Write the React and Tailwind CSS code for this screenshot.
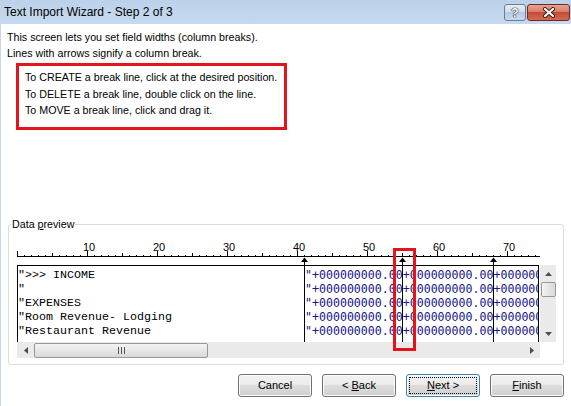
import React from "react";

const UI = "font-['Liberation_Sans',Arial,sans-serif]";

function Ruler() {
  const ticks = [];
  for (let n = 0; n <= 74; n++) {
    const x = 7 * n;
    if (n % 10 === 0) ticks.push(<rect key={n} x={x} y={14} width={1} height={5} fill="#000" />);
    else if (n % 5 === 0) ticks.push(<rect key={n} x={x} y={16} width={1} height={3} fill="#000" />);
    else ticks.push(<rect key={n} x={x} y={18} width={1} height={1} fill="#000" />);
  }
  const labels = [10, 20, 30, 40, 50, 60, 70];
  return (
    <svg width="523" height="28" className="block" shapeRendering="crispEdges">
      <rect x="0" y="19" width="523" height="1" fill="#000" />
      {ticks}
      {labels.map((n) => (
        <text
          key={n}
          x={7 * n + 2}
          y={13.5}
          textAnchor="middle"
          fontFamily="'Liberation Sans', Arial, sans-serif"
          fontSize="11"
          fill="#000"
        >
          {n}
        </text>
      ))}
    </svg>
  );
}

function Breaks() {
  const cols = [41, 55, 68];
  return (
    <svg width="523" height="105" className="absolute left-0 top-0 pointer-events-none">
      {cols.map((c) => {
        const x = 7 * c;
        return (
          <g key={c}>
            <polygon points={`${x + 0.5},20.5 ${x + 4},25 ${x - 3},25`} fill="#000" />
            <rect x={x} y={24} width="1" height="81" fill="#000" shapeRendering="crispEdges" />
          </g>
        );
      })}
    </svg>
  );
}

const rows = ['">>> INCOME', '"', '"EXPENSES', '"Room Revenue- Lodging', '"Restaurant Revenue'];
const nums = '"+000000000.00+000000000.00+000000000.00+000000000.00';

function Arrow({ dir }) {
  const pts = {
    up: "0,4 3.5,0 7,4",
    down: "0,0 3.5,4 7,0",
    left: "4,0 0,3.5 4,7",
    right: "0,0 4,3.5 0,7",
  }[dir];
  const w = dir === "up" || dir === "down" ? 7 : 4;
  const h = dir === "up" || dir === "down" ? 4 : 7;
  return (
    <svg width={w} height={h} className="block">
      <polygon points={pts} fill="#4d4d4d" />
    </svg>
  );
}

function Btn({ children, primary }) {
  return (
    <div
      className={`w-[74px] h-[23px] rounded-[3px] border ${
        primary ? "border-[#3c7fb1]" : "border-[#707070]"
      } bg-[linear-gradient(#f2f2f2_0%,#ebebeb_50%,#dddddd_50%,#cfcfcf_100%)] shadow-[inset_0_0_0_1px_#fbfbfb] flex items-center justify-center p-[2px]`}
    >
      <div
        className={`w-full h-full flex items-center justify-center text-[11px] text-black ${
          primary ? "border border-dotted border-black" : ""
        }`}
      >
        <span className="whitespace-pre">{children}</span>
      </div>
    </div>
  );
}

export default function App() {
  return (
    <div className={`relative w-[571px] h-[406px] bg-white overflow-hidden ${UI}`}>
      {/* Title bar */}
      <div className="h-[24px] flex items-start bg-linear-to-b from-[#bcd2ea] to-[#c5d9ef]">
        <div className="pl-[4px] pt-[5px] text-[12px] leading-[14px] text-black">
          Text Import Wizard - Step 2 of 3
        </div>
        <div className="ml-auto flex gap-[1px] pt-[4px] pr-[1px]">
          <div className="w-[22px] h-[17px] rounded-[3px] border border-[#6b7c93] bg-[linear-gradient(#e6eef7_0%,#cfdcec_50%,#b8cbe2_50%,#c9d9ec_100%)] flex items-center justify-center">
            <span className="text-[12px] font-bold leading-none text-white [text-shadow:0_0_1px_#223,0_0_1px_#223,0_0_1px_#223]">
              ?
            </span>
          </div>
          <div className="w-[43px] h-[17px] rounded-[3px] border border-[#6e2a22] bg-[linear-gradient(#e8a493_0%,#d87c68_45%,#c44a33_50%,#d36a52_100%)] flex items-center justify-center">
            <svg width="14" height="11">
              <path d="M3 2 L11 9 M11 2 L3 9" stroke="#3b1a16" strokeWidth="4" strokeLinecap="round" />
              <path d="M3 2 L11 9 M11 2 L3 9" stroke="#fff" strokeWidth="2.2" strokeLinecap="round" />
            </svg>
          </div>
        </div>
      </div>

      {/* Body */}
      <div className="h-[382px] border-l border-[#c4d8ee] flex flex-col">
        <div className="pl-[6px] pt-[5px] text-[10.7px] leading-[16px] text-black whitespace-nowrap">
          <div>This screen lets you set field widths (column breaks).</div>
          <div>Lines with arrows signify a column break.</div>
        </div>

        <div className="ml-[15px] mt-[2px] w-[271px] h-[67px] border-[3px] border-[#e3141b] pl-[6px] pt-[3px] text-[10.7px] leading-[16.5px] text-black whitespace-nowrap">
          <div>To CREATE a break line, click at the desired position.</div>
          <div>To DELETE a break line, double click on the line.</div>
          <div>To MOVE a break line, click and drag it.</div>
        </div>

        <fieldset className="ml-[7px] mr-[7px] mt-[87px] border border-[#d5dfe5] rounded-[3px]">
          <legend className="ml-[2px] px-[1px] text-[10.7px] leading-[14px] text-black">
            Data <u>p</u>review
          </legend>
          <div className="pl-[8px] pr-[7px] pt-[6px] pb-[6px]">
            <div className="relative w-[539px]">
              <Ruler />
              <div className="flex">
                <div className="w-[522px] h-[77px] border-l border-t border-r border-black overflow-hidden pt-[2px]">
                  {rows.map((r, i) => (
                    <div key={i} className="flex h-[14px] leading-[14px] whitespace-pre">
                      <span className="w-[287px] shrink-0 font-['Liberation_Mono','Courier_New',monospace] text-[11.67px] text-black">
                        {r}
                      </span>
                      <span className="font-['DejaVu_Sans_Mono',monospace] text-[11.6px] text-[#16168c]">
                        {nums}
                      </span>
                    </div>
                  ))}
                </div>
                <div className="ml-[1px] w-[16px] h-[77px] bg-[#eaeaea] flex flex-col items-center">
                  <div className="h-[17px] flex items-center justify-center">
                    <Arrow dir="up" />
                  </div>
                  <div className="w-[15px] h-[15px] rounded-[2px] border border-[#979797] bg-linear-to-r from-[#f4f4f4] to-[#d9d9d9]" />
                  <div className="flex-1" />
                  <div className="h-[17px] flex items-center justify-center">
                    <Arrow dir="down" />
                  </div>
                </div>
              </div>
              <div className="w-[523px] h-[16px] bg-[#eaeaea] flex items-center">
                <div className="w-[17px] flex items-center justify-center">
                  <Arrow dir="left" />
                </div>
                <div className="w-[174px] h-[15px] rounded-[2px] border border-[#979797] bg-linear-to-b from-[#f4f4f4] to-[#d9d9d9] flex items-center justify-center">
                  <svg width="7" height="7" shapeRendering="crispEdges">
                    <rect x="0" y="0" width="1" height="7" fill="#555" />
                    <rect x="3" y="0" width="1" height="7" fill="#555" />
                    <rect x="6" y="0" width="1" height="7" fill="#555" />
                  </svg>
                </div>
                <div className="flex-1" />
                <div className="w-[17px] flex items-center justify-center">
                  <Arrow dir="right" />
                </div>
              </div>
              <Breaks />
            </div>
          </div>
        </fieldset>

        <div className="mt-[9px] pr-[7px] flex justify-end gap-[10px]">
          <Btn>Cancel</Btn>
          <Btn>
            {"< "}
            <u>B</u>ack
          </Btn>
          <Btn primary>
            <u>N</u>ext{" >"}
          </Btn>
          <Btn>
            <u>F</u>inish
          </Btn>
        </div>
      </div>

      {/* Annotation overlay */}
      <div className="absolute left-[393px] top-[248px] w-[23px] h-[103px] border-[3px] border-[#e3141b] pointer-events-none" />
    </div>
  );
}
